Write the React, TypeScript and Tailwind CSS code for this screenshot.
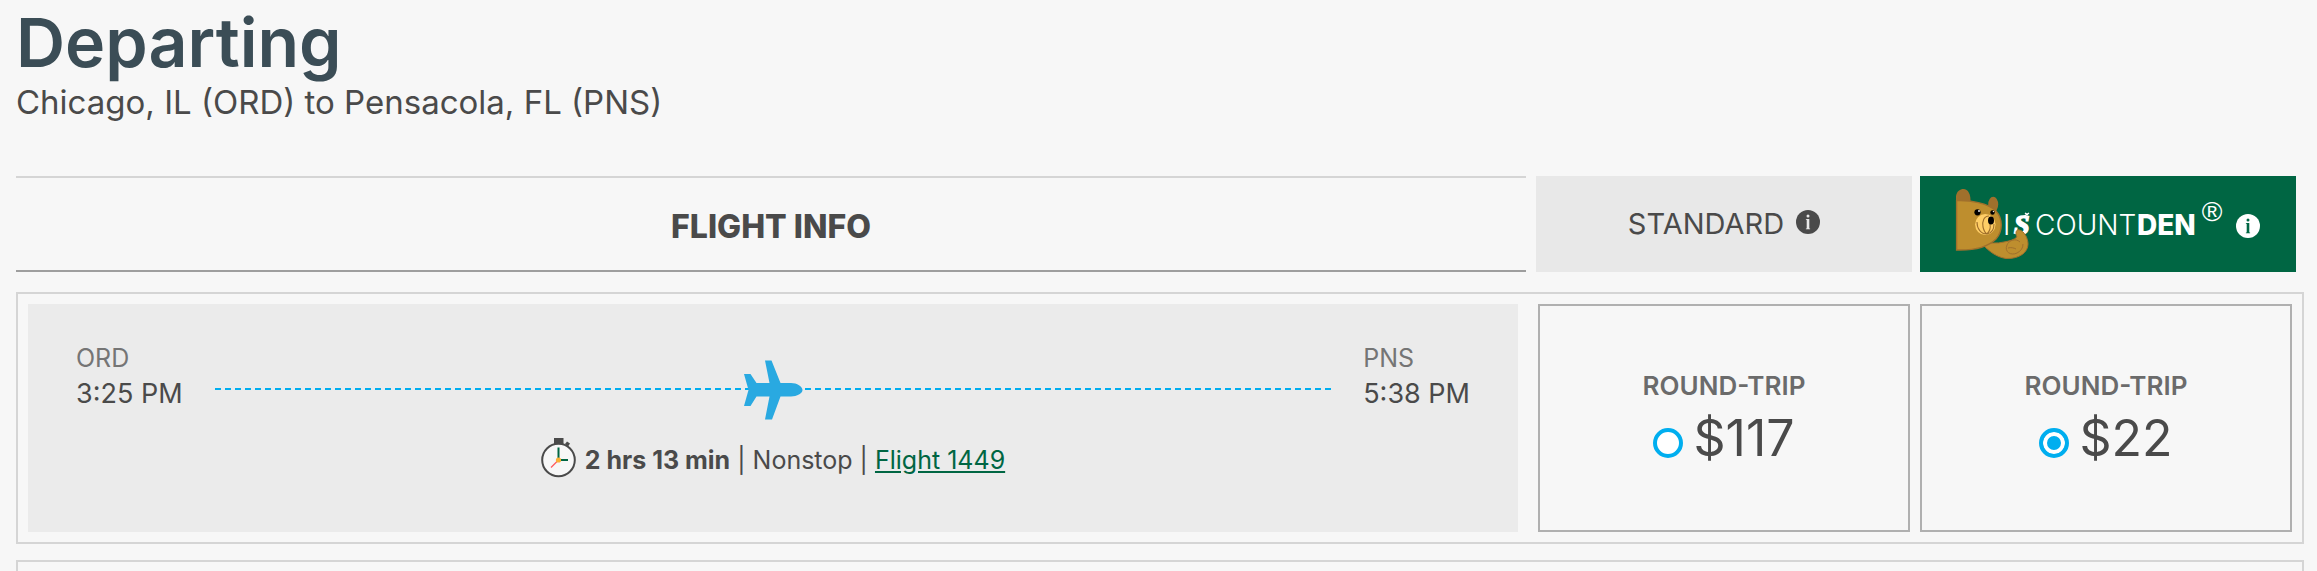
import { useState } from 'react'

const fares = [
  { id: 'standard', name: 'Standard', price: '$117' },
  { id: 'den', name: 'Discount Den', price: '$22' },
]

function InfoIcon() {
  return (
    <svg viewBox="0 0 24 24" className="size-6" aria-hidden="true">
      <circle cx="12" cy="12" r="12" fill="currentColor" />
      <g className="fill-(--dot)">
        <circle cx="12" cy="6" r="1.5" />
        <path d="M10.400 9h2.900v9.500h.8v.8h-4.200v-.8h.8V9.800h-.8V9z" />
      </g>
    </svg>
  )
}

function DenLogo() {
  return (
    <svg
      viewBox="0 0 248 72"
      className="h-[72px] w-[248px] shrink-0 font-['Inter',sans-serif]"
      role="img"
      aria-label="Discount Den"
    >
      <g fill="#fff" fontSize="28">
        <text x="49" y="47" fontWeight="300">
          I
        </text>
        <text
          x="60"
          y="46"
          fontSize="28"
          fontWeight="700"
          fontStyle="italic"
          fontFamily="'Liberation Serif', serif"
          stroke="#fff"
          strokeWidth="1.6"
        >
          S
        </text>
        <text x="81" y="47" fontWeight="300">
          COUNT
        </text>
        <text x="183" y="47" fontWeight="800">
          DEN
        </text>
      </g>
      <path d="M71 25l3 2M69 29l6-4" stroke="#fff" strokeWidth="1.5" />
      {/* ears */}
      <path d="M2 14V8C3 3 6 1 9.500 1C14 1 17 6 16.500 15Z" fill="#a0702c" />
      <ellipse cx="39.200" cy="16.500" rx="5" ry="7.800" fill="#a0702c" />
      {/* arm */}
      <path
        d="M29 56C36 54 43 56 50 54C55 53 60 52 63 49C61 45 62 41 65.500 42C70 43 74 50 74 56C74 64 66 71 52 70.500C42 69 35 63 29 57Z"
        fill="#be8e2e"
        stroke="#a0702c"
        strokeWidth="1"
      />
      <path
        d="M66 54C62 50 55 52 53 57C50 64 57 68 63 65C67 63 69 60 69 56M54 60C57 59 60 60 62 61"
        fill="none"
        stroke="#a0702c"
        strokeWidth="1"
      />
      {/* head */}
      <path
        d="M2.600 12.600C16 12 34 15 42 23C49 31 49 43 42 51C33 60 18 62.500 2.600 62Z"
        fill="#be8e2e"
        stroke="#a0702c"
        strokeWidth="1.400"
      />
      <circle cx="23.500" cy="24.300" r="3.100" fill="#000" />
      <circle cx="25" cy="23" r="0.900" fill="#fff" />
      <circle cx="38.500" cy="24.500" r="2.200" fill="#000" />
      <circle cx="39.400" cy="23.600" r="0.700" fill="#fff" />
      <ellipse cx="31.300" cy="36.500" rx="10.200" ry="10.500" fill="#ffce66" />
      <path
        d="M35 28C30 28 28 33 29 39C30 43 31 45 33 46M23 34C23 41 27 46 33 46C38 45 40 41 40 36M36 36C37 41 35 44 33 46"
        fill="none"
        stroke="#a0702c"
        strokeWidth="1.100"
      />
      <ellipse cx="37" cy="32.500" rx="3" ry="3.900" fill="#000" />
    </svg>
  )
}

function Stopwatch() {
  return (
    <svg viewBox="0 0 36 40" className="mb-1 h-10 w-9" aria-hidden="true">
      <rect x="13" y="0" width="9.500" height="6" fill="#4a4a4a" />
      <path d="M24 6l2-2.500 3 2-2 3z" fill="#4a4a4a" />
      <circle cx="17.500" cy="22" r="16.300" fill="#f7f7f7" stroke="#4a4a4a" strokeWidth="2" />
      <path d="M17.500 9.500V22H27" fill="none" stroke="#006643" strokeWidth="2" />
      <path d="M17.500 22L10 29.500" stroke="#ff5a5f" strokeWidth="1.200" />
      <circle cx="17.500" cy="22" r="2.600" fill="#fbb034" />
    </svg>
  )
}

function Plane() {
  return (
    <svg viewBox="0 0 60 60" className="size-[60px]" aria-hidden="true">
      <path
        d="M22 .5h6.500L37.500 23H48c6 0 11.500 3.500 11.500 7S54 36.500 48 36.500H37.500L29 59.500h-7L26.500 36.500H13.500L7.500 46H1L5.500 30 1 14h6.500l6 9h13z"
        fill="#29a9e1"
      />
    </svg>
  )
}

function ColumnHeaders() {
  return (
    <div className="mt-[54px] mr-2 flex h-24 gap-2">
      <div className="mr-0.5 flex flex-1 items-center justify-center border-t-2 border-b-2 border-t-[#d5d5d5] border-b-[#9e9e9e] pt-1.5">
        <h2 className="text-[32px] leading-10 font-extrabold">FLIGHT INFO</h2>
      </div>
      <div className="flex w-[376px] items-center justify-center gap-3 bg-[#e8e8e8]">
        <span className="text-[29px] leading-8">STANDARD</span>
        <button type="button" aria-label="About standard fares" className="pb-1 [--dot:#e8e8e8]">
          <InfoIcon />
        </button>
      </div>
      <div className="flex w-[376px] items-center justify-center bg-[#006643] pr-0.5 text-white">
        <DenLogo />
        <span className="self-start pt-5 font-['Liberation_Sans',sans-serif] text-[28px] leading-8">
          ®
        </span>
        <button type="button" aria-label="About Discount Den" className="pt-1 pl-3.5 [--dot:#006643]">
          <InfoIcon />
        </button>
      </div>
    </div>
  )
}

function Airport({ code, time }: { code: string; time: string }) {
  return (
    <div className="shrink-0">
      <p className="text-[25px] leading-8 text-[#757575]">{code}</p>
      <p className="text-[27px] leading-10">{time}</p>
    </div>
  )
}

function FlightRow() {
  const [fare, setFare] = useState('den')

  return (
    <div className="mt-5 flex border-2 border-[#d5d5d5] p-2.5">
      <div className="mr-5 flex-1 bg-[#ebebeb] px-12 pt-[38px] pb-[50px]">
        <div className="flex items-center gap-8">
          <Airport code="ORD" time="3:25 PM" />
          <div className="relative mt-[22px] flex-1 border-t-2 border-dashed border-[#00aeef]">
            <div className="absolute -top-[30px] left-1/2 -translate-x-1/2">
              <Plane />
            </div>
          </div>
          <Airport code="PNS" time="5:38 PM" />
        </div>
        <div className="mt-6 flex items-center justify-center gap-2 text-[25px] leading-10">
          <Stopwatch />
          <p>
            <span className="font-bold">2 hrs 13 min</span> | Nonstop |{' '}
            <a href="#flight-1449" className="text-[#006643] underline">
              Flight 1449
            </a>
          </p>
        </div>
      </div>
      {/* fare choices */}
      <div className="flex gap-2.5">
        {fares.map(({ id, name, price }) => (
          <label
            key={id}
            className="flex w-[372px] flex-col items-center justify-center border-2 border-[#b0b0b0] pt-2"
          >
            <span className="text-[26px] leading-8 font-semibold text-[#6b6b6b]">ROUND-TRIP</span>
            <span className="flex items-center gap-2.5">
              <input
                type="radio"
                name="fare"
                value={id}
                aria-label={`${name} ${price}`}
                checked={fare === id}
                onChange={() => setFare(id)}
                className="mt-2.5 size-[30px] appearance-none rounded-full border-4 border-[#00aeef] bg-white checked:bg-[#00aeef] checked:shadow-[inset_0_0_0_4px_#fff]"
              />
              <span className="text-[50px] leading-[72px]">{price}</span>
            </span>
          </label>
        ))}
      </div>
    </div>
  )
}

export default function App() {
  return (
    <main className="h-screen overflow-hidden bg-[#f7f7f7] pr-[13px] pl-4 font-['Inter',sans-serif] text-[#4a4a4a]">
      <h1 className="text-[68px] leading-[84px] font-semibold text-[#3b4d56]">Departing</h1>
      <p className="-mt-0.5 text-[33px] leading-10">Chicago, IL (ORD) to Pensacola, FL (PNS)</p>
      <ColumnHeaders />
      <FlightRow />
      <div className="mt-4 h-64 border-2 border-[#d5d5d5]" />
    </main>
  )
}
